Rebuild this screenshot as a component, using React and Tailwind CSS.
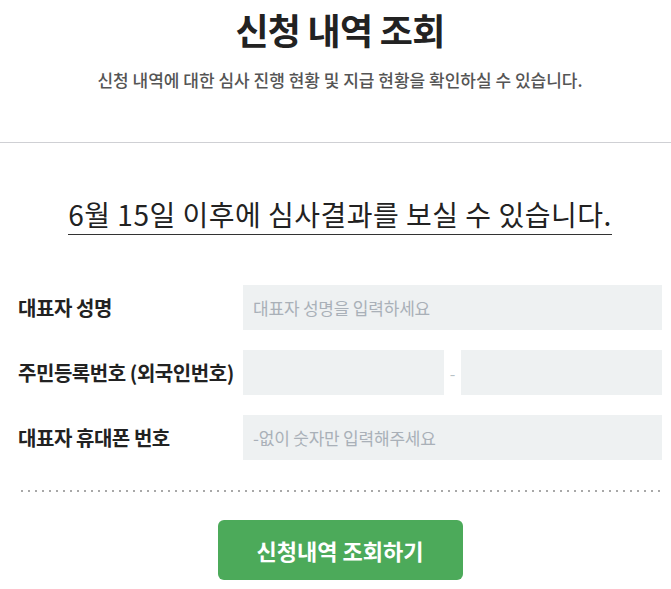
import { useState } from "react";

const FONT = "font-['Noto_Sans_CJK_KR','Noto_Sans',sans-serif]";

function Field({ label, children }) {
  return (
    <div className="flex items-center">
      <label className="w-[225px] shrink-0 text-[20px] font-bold tracking-[-0.45px] text-[#222]">
        {label}
      </label>
      <div className="flex flex-1 items-center">{children}</div>
    </div>
  );
}

function TextBox({ placeholder, value, onChange, className = "" }) {
  return (
    <input
      type="text"
      value={value}
      onChange={onChange}
      placeholder={placeholder}
      className={`h-[45px] bg-[#eef1f2] px-[10px] text-[17px] tracking-[-0.2px] text-[#333] placeholder:text-[#a9b0b8] outline-none ${className}`}
    />
  );
}

export default function App() {
  const [name, setName] = useState("");
  const [idFront, setIdFront] = useState("");
  const [idBack, setIdBack] = useState("");
  const [phone, setPhone] = useState("");

  return (
    <div className={`${FONT} min-h-screen bg-white text-[#222]`}>
      {/* HEADER */}
      <div className="border-b border-[#cfd0d4] pb-[50px] pt-[2px]">
        <div className="ml-[18px] w-[644px] text-center">
          <h1 className="text-[36px] font-bold leading-[54px] tracking-[-0.75px]">
            신청 내역 조회
          </h1>
          <p className="mt-[12px] text-[17px] font-medium leading-[24px] tracking-[0px] text-[#555]">
            신청 내역에 대한 심사 진행 현황 및 지급 현황을 확인하실 수 있습니다.
          </p>
        </div>
      </div>

      <div className="ml-[18px] w-[644px]">
        {/* NOTICE */}
        <div className="mt-[53px] text-center">
          <span className="inline-block border-b border-[#333] pb-[2px] text-[28px] leading-[36px] tracking-[0.5px] text-[#222]">
            6월 15일 이후에 심사결과를 보실 수 있습니다.
          </span>
        </div>

        {/* FORM */}
        <div className="mt-[50px] flex flex-col gap-[20px]">
          <Field label="대표자 성명">
            <TextBox
              className="w-full"
              placeholder="대표자 성명을 입력하세요"
              value={name}
              onChange={(e) => setName(e.target.value)}
            />
          </Field>
          <Field label="주민등록번호 (외국인번호)">
            <TextBox
              className="w-[201px]"
              value={idFront}
              onChange={(e) => setIdFront(e.target.value)}
            />
            <span className="w-[17px] text-center text-[16px] text-[#b8c2c6]">-</span>
            <TextBox
              className="w-[201px]"
              value={idBack}
              onChange={(e) => setIdBack(e.target.value)}
            />
          </Field>
          <Field label="대표자 휴대폰 번호">
            <TextBox
              className="w-full"
              placeholder="-없이 숫자만 입력해주세요"
              value={phone}
              onChange={(e) => setPhone(e.target.value)}
            />
          </Field>
        </div>

        <div className="mt-[30px] h-[2px] bg-[linear-gradient(to_right,#a8a8a8_2px,transparent_2px)] bg-[length:7px_2px] ml-[3px]" />

        {/* SUBMIT */}
        <div className="mt-[28px] flex justify-center">
          <button
            type="button"
            className="h-[60px] w-[245px] rounded-[6px] bg-[#4caa5a] text-[22px] font-bold text-white"
          >
            신청내역 조회하기
          </button>
        </div>
      </div>
    </div>
  );
}
